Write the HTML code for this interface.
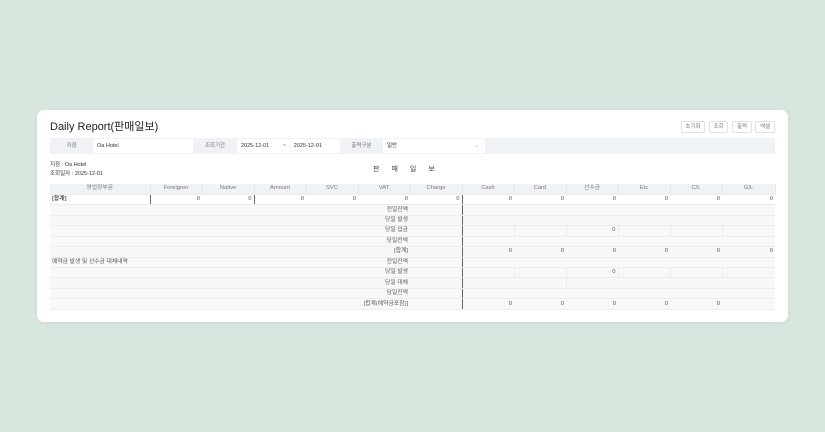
<!DOCTYPE html>
<html><head><meta charset="utf-8"><style>
*{margin:0;padding:0;box-sizing:border-box}
body{width:825px;height:432px;background:#d8e7de;font-family:"Liberation Sans","Noto Sans CJK KR",sans-serif;position:relative;overflow:hidden;color:#333}
.card{position:absolute;left:37px;top:110px;width:751px;height:212px;background:#fff;border-radius:7px;box-shadow:0 1px 4px rgba(0,0,0,.06)}
.a{position:absolute}
.title{left:50px;top:118px;font-size:11px;color:#222}
.btn{top:121px;height:12px;border:1px solid #e2e2e2;border-radius:2px;font-size:5.5px;color:#777;line-height:10px;text-align:center;background:#fff}
.bar{left:50px;top:138px;width:725px;height:16px;background:#f1f2f6}
.inp{top:139px;height:14px;background:#fff;font-size:5.5px;line-height:14px;padding-left:4px;color:#333}
.lbl{top:138px;height:16px;font-size:5.5px;line-height:16px;color:#777;text-align:center}
.sm{font-size:5.5px;color:#333}
table{position:absolute;left:50px;top:184px;width:725px;border-collapse:collapse;table-layout:fixed;font-size:5.8px}
td{height:10.45px;border:0;border-bottom:1px solid #ededed;background:#f8f8f8;padding:0 2px;text-align:right;color:#555;white-space:nowrap;overflow:hidden;line-height:9px}
tr.h td{background:#f1f2f6;text-align:center;color:#777;border-right:1px solid #e6e6e6}
tr.w td{background:#fff}
.v{border-left:1px solid #ececec}
.tl{border-left:1.5px solid #666}
.L{text-align:left}
</style></head><body>
<div class="card"></div>
<div class="a title">Daily Report(판매일보)</div>
<div class="a btn" style="left:681px;width:24px">초기화</div>
<div class="a btn" style="left:709px;width:19px">조회</div>
<div class="a btn" style="left:732px;width:20px">출력</div>
<div class="a btn" style="left:755px;width:20px">엑셀</div>
<div class="a bar"></div>
<div class="a lbl" style="left:50px;width:43px">지점</div>
<div class="a inp" style="left:93px;width:100px">Oa Hotel</div>
<div class="a lbl" style="left:193px;width:44px">조회기간</div>
<div class="a inp" style="left:237px;width:103px">2025-12-01 &nbsp; &nbsp; &nbsp; &nbsp; ~ &nbsp; &nbsp; 2025-12-01</div>
<div class="a lbl" style="left:340px;width:43px">출력구분</div>
<div class="a inp" style="left:383px;width:102px">일반<span style="position:absolute;right:6px;color:#999">⌄</span></div>
<div class="a sm" style="left:50px;top:160px">지점 : Oa Hotel</div>
<div class="a sm" style="left:50px;top:169px">조회일자 : 2025-12-01</div>
<div class="a" style="left:373px;top:164px;font-size:7px;color:#444;letter-spacing:12px">판매일보</div>
<table>
<colgroup><col style="width:100px"><col span="11" style="width:52px"><col style="width:53px"></colgroup>
<tr class="h"><td>영업장부문</td><td>Foreigner</td><td>Native</td><td>Amount</td><td>SVC</td><td>VAT</td><td>Charge</td><td>Cash</td><td>Card</td><td>선수금</td><td>Etc</td><td>C/L</td><td>G/L</td></tr>
<tr class="w"><td class="L" style="font-weight:bold">[합계]</td><td class="tl">0</td><td>0</td><td class="tl">0</td><td>0</td><td>0</td><td>0</td><td class="tl">0</td><td>0</td><td>0</td><td>0</td><td>0</td><td>0</td></tr>
<tr><td colspan="6">전일잔액</td><td></td><td class="tl" colspan="6"></td></tr>
<tr><td colspan="6">당일 발생</td><td></td><td class="tl" colspan="6"></td></tr>
<tr><td colspan="6">당일 입금</td><td></td><td class="tl"></td><td class="v"></td><td class="v">0</td><td class="v"></td><td class="v"></td><td class="v"></td></tr>
<tr><td colspan="6">당일잔액</td><td></td><td class="tl" colspan="6"></td></tr>
<tr><td colspan="6">[합계]</td><td></td><td class="tl">0</td><td>0</td><td>0</td><td>0</td><td>0</td><td>0</td></tr>
<tr><td colspan="6"><span style="float:left">예약금 발생 및 선수금 대체내역</span>전일잔액</td><td></td><td class="tl" colspan="6"></td></tr>
<tr><td colspan="6">당일 발생</td><td></td><td class="tl"></td><td class="v"></td><td class="v">0</td><td class="v"></td><td class="v"></td><td class="v"></td></tr>
<tr><td colspan="6">당일 대체</td><td></td><td class="tl" colspan="2"></td><td class="v" colspan="4"></td></tr>
<tr><td colspan="6">당일잔액</td><td></td><td class="tl" colspan="6"></td></tr>
<tr><td colspan="6">[합계(예약금포함)]</td><td></td><td class="tl">0</td><td>0</td><td>0</td><td>0</td><td>0</td><td></td></tr>
</table>
</body></html>
